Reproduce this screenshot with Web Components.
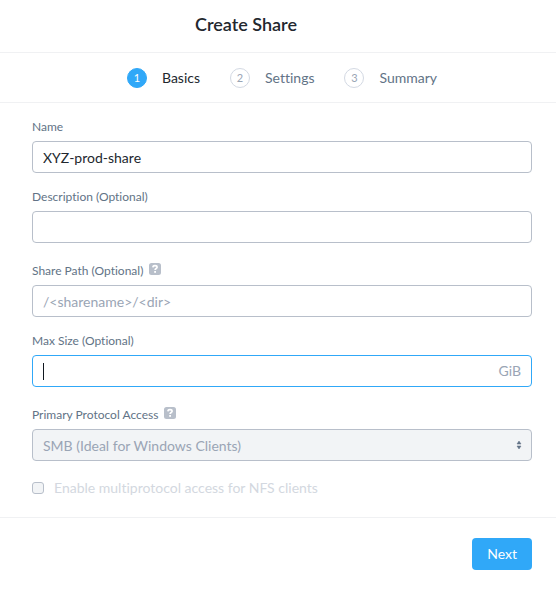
<!DOCTYPE html>
<html lang="en">
<head>
<meta charset="utf-8">
<title>Create Share</title>
<style>
html,body{margin:0;background:#fff}
body{font-family:Lato,"Open Sans",sans-serif;font-size:14px;line-height:20px;color:#22272e;font-variant-ligatures:none}
</style>
</head>
<body>
<share-dialog></share-dialog>
<script>
class Base extends HTMLElement{
  constructor(){super();this.attachShadow({mode:'open'});}
  connectedCallback(){
    this.shadowRoot.innerHTML='<style>*{box-sizing:border-box}'+this.css()+'</style>'+this.html();
  }
}
customElements.define('help-icon',class extends Base{
  css(){return ':host{display:inline-flex;width:12px;height:12px}svg{display:block}';}
  html(){return `<svg width="12" height="12" viewBox="0 0 12 12" role="img" aria-label="Help"><rect width="12" height="12" rx="2.500" fill="#b8bfca"/><path d="M3.900 4.400C4 3.200 4.800 2.700 6 2.700c1.300 0 2.100.6 2.100 1.600 0 1.300-2 1.200-2 2.700" fill="none" stroke="#fff" stroke-width="1.700"/><rect x="5.200" y="8" width="1.800" height="1.800" fill="#fff"/></svg>`;}
});
customElements.define('wizard-step',class extends Base{
  css(){return `:host{display:flex;align-items:center;gap:15px;color:#627386;font-weight:400}
  .n{width:20px;height:20px;border:1px solid #d3d9e3;border-radius:50%;display:grid;place-items:center;font-size:11px;line-height:18px;color:#9aa5b5}
  :host([active]){color:#22272e}
  :host([active]) .n{background:#30a8f8;border-color:#30a8f8;color:#fff}`;}
  html(){return `<span class="n">${this.getAttribute('number')}</span><span><slot></slot></span>`;}
});
customElements.define('form-field',class extends Base{
  css(){return `:host{display:block}
  .top{display:flex;align-items:center;gap:6px;min-height:16px;margin-bottom:6px}
  label{font-size:12px;line-height:16px;color:#627386}
  .top.help{height:20px}
  .help label{padding-top:4px}
  .box{display:flex;align-items:center;position:relative;height:32px;border:1px solid #b8bfca;border-radius:4px;background:#fff}
  input,select{flex:1;min-width:0;height:30px;border:0;outline:0;margin:0;padding:0 10px;background:transparent;font:inherit;font-variant-ligatures:none;color:#22272e;appearance:none;caret-color:transparent}
  input::placeholder{color:#9aa5b5;opacity:1}
  select{color:#9aa5b5;opacity:1;padding-top:2px}
  .focus{border-color:#30a8f8}
  .caret{position:absolute;left:10px;top:7px;width:1px;height:17px;background:#111820}
  .unit{color:#9aa5b5;padding-right:10px}
  .disabled{background:#f2f4f6}
  .arrows{position:absolute;right:9px;top:11px;pointer-events:none}`;}
  html(){
    const a=n=>this.getAttribute(n),h=this.hasAttribute('help'),f=this.hasAttribute('focused'),o=a('option'),u=a('unit');
    const ctl=o?`<select id="c" disabled><option>${o}</option></select><svg class="arrows" width="6" height="8" viewBox="0 0 6 8"><path d="M1 3 3 0 5 3ZM1 5 3 8 5 5Z" fill="#627386" stroke="#627386" stroke-width=".5"/></svg>`
      :`<input id="c" type="text" value="${a('value')||''}" placeholder="">`;
    return `<div class="top ${h?'help':''}"><label for="c">${a('label')}</label>${h?'<help-icon></help-icon>':''}</div>
    <div class="box ${f?'focus':''} ${o?'disabled':''}">${ctl}${f?'<span class="caret"></span>':''}${u?`<span class="unit">${u}</span>`:''}</div>`;
  }
  connectedCallback(){super.connectedCallback();
    const i=this.shadowRoot.querySelector('input');if(i)i.placeholder=this.getAttribute('placeholder')||'';}
});
customElements.define('check-option',class extends Base{
  css(){return `:host{display:block}
  label{display:flex;align-items:center;gap:10px;color:#d3d8e0}
  input{appearance:none;width:12px;height:12px;margin:0;border:1px solid #b8bfca;border-radius:3px;background:#f2f4f6}`;}
  html(){return '<label><input type="checkbox" disabled><span><slot></slot></span></label>';}
});
customElements.define('primary-button',class extends Base{
  css(){return `:host{display:inline-block}
  button{display:block;height:32px;border:0;border-radius:4px;padding:0 15px;background:#30a8f8;color:#fff;font:inherit}`;}
  html(){return '<button type="button"><slot></slot></button>';}
});
customElements.define('share-dialog',class extends Base{
  css(){return `:host{display:block}
  header{padding:12px 64px 16px 0;border-bottom:1px solid #f0f1f3;text-align:center}
  h1{margin:0;font-size:18px;line-height:24px;font-weight:600}
  nav{display:flex;justify-content:center;gap:30px;padding:15px 0 14px 8px;border-bottom:1px solid #f0f1f3}
  main{display:flex;flex-direction:column;gap:16px;padding:16px 24px 19px 32px}
  check-option{margin-top:1px}
  footer{display:flex;justify-content:flex-end;padding:20px 24px 24px;border-top:1px solid #f0f1f3}`;}
  html(){return `<header><h1>Create Share</h1></header>
  <nav aria-label="Steps"><wizard-step number="1" active>Basics</wizard-step><wizard-step number="2">Settings</wizard-step><wizard-step number="3">Summary</wizard-step></nav>
  <main>
    <form-field label="Name" value="XYZ-prod-share"></form-field>
    <form-field label="Description (Optional)"></form-field>
    <form-field label="Share Path (Optional)" help placeholder="/&lt;sharename&gt;/&lt;dir&gt;"></form-field>
    <form-field label="Max Size (Optional)" focused unit="GiB"></form-field>
    <form-field label="Primary Protocol Access" help option="SMB (Ideal for Windows Clients)"></form-field>
    <check-option>Enable multiprotocol access for NFS clients</check-option>
  </main>
  <footer><primary-button>Next</primary-button></footer>`;}
});
</script>
</body>
</html>
